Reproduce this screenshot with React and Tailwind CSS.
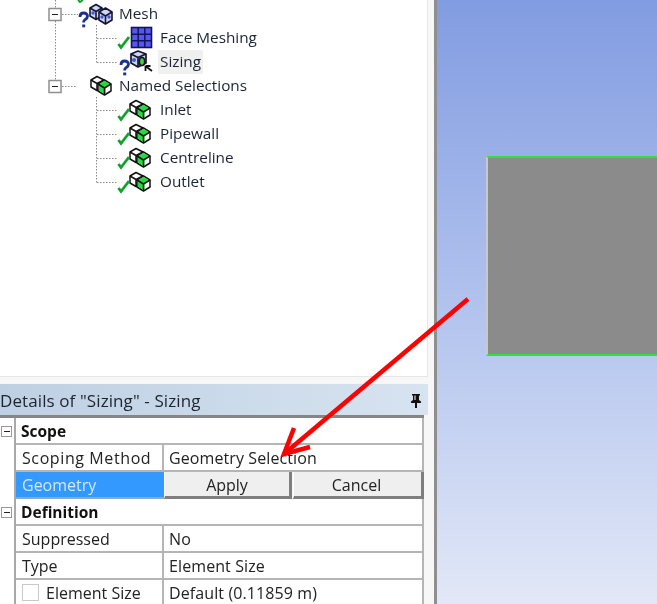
const font = { fontFamily: '"Open Sans", "Noto Sans", sans-serif' };

const Check = () => (
  <path d="M1.500 18l2.500 3.500L12 11" fill="none" stroke="#12a32a" strokeWidth="2.800" />
);

const Question = ({ x = 0 }) => (
  <g transform={`translate(${x} 0)`}>
    <path
      d="M1 15c0-2.800 1.800-4 3.800-4s3.700 1.300 3.700 3.200-1.200 2.600-2.500 3.500c-1 .7-1.400 1.500-1.400 2.800"
      fill="none"
      stroke="#1a3290"
      strokeWidth="2.800"
    />
    <rect x="3.200" y="22.500" width="3" height="2.800" fill="#1a3290" />
  </g>
);

const GreenCubes = () => (
  <g stroke="#111" strokeWidth="1.500" strokeLinejoin="round">
    <path d="M13 6l6-3.500L26 6v7l-7 3.500-6-3.500z" fill="#fff" />
    <path d="M13 6l6 3.500L26 6M19 9.500v7" fill="none" />
    <path d="M20 10l6.500-4L33 10v7l-6.500 4L20 17z" fill="#fff" />
    <path d="M21 10l5.500-3.300L32 10l-4.500 2.500v7l-1 .5-5.500-3.500z" fill="#22dd3a" stroke="none" />
    <path d="M20 10l6.500 4v7M26.500 14L33 10" fill="none" />
  </g>
);

const BlueCubes = () => (
  <g stroke="#14142e" strokeWidth="1.600" strokeLinejoin="round">
    <path d="M12 6l6-3.500L24 6v8l-6 3.500L12 14z" fill="#cdd5f8" />
    <path d="M12 6l6 3.500L24 6M18 9.500v8" fill="none" />
    <path d="M21 10l6.500-4L34 10v8l-6.500 4L21 18z" fill="#cdd5f8" />
    <path d="M21 10l6.500 4L34 10M27.500 14v8" fill="none" />
    <circle cx="15" cy="11" r="1.700" fill="#3f58dc" stroke="none" />
    <circle cx="24" cy="15" r="1.700" fill="#3f58dc" stroke="none" />
    <circle cx="31" cy="15" r="1.700" fill="#3f58dc" stroke="none" />
  </g>
);

const MeshGrid = () => (
  <g>
    <rect x="14.500" y="1.500" width="20" height="20" fill="#5656f2" stroke="#14145c" strokeWidth="1.600" />
    <path d="M21.200 2v19M27.800 2v19M15 8.200h19M15 14.800h19" stroke="#14145c" strokeWidth="1.500" />
  </g>
);

const SizingIcon = () => (
  <g>
    <g stroke="#14142e" strokeWidth="1.700" strokeLinejoin="round">
      <path d="M14 4l7-3 8 3v9l-8 4-7-4z" fill="#cdd5f8" />
      <path d="M14 4l7 3.500L29 4M21 7.500V17" fill="none" />
      <ellipse cx="25" cy="11.500" rx="2.700" ry="4" fill="#45d43a" />
      <circle cx="17" cy="10" r="2" fill="#3f58dc" stroke="none" />
    </g>
    <path d="M29 16.500l6 4.500M28.500 16v5M28.500 16h5" stroke="#111" strokeWidth="1.800" fill="none" />
  </g>
);

const icons = {
  mesh: (
    <>
      <BlueCubes />
      <Question x={1} />
    </>
  ),
  face: (
    <>
      <MeshGrid />
      <Check />
    </>
  ),
  sizing: (
    <>
      <SizingIcon />
      <Question x={3} />
    </>
  ),
  named: <GreenCubes />,
  child: (
    <>
      <GreenCubes />
      <Check />
    </>
  ),
};

const treeRows = [
  { label: "Mesh", icon: "mesh", top: true },
  { label: "Face Meshing", icon: "face" },
  { label: "Sizing", icon: "sizing", selected: true },
  { label: "Named Selections", icon: "named", top: true },
  { label: "Inlet", icon: "child" },
  { label: "Pipewall", icon: "child" },
  { label: "Centreline", icon: "child" },
  { label: "Outlet", icon: "child" },
];

const TreeLines = () => (
  <svg className="absolute left-0 top-0" width="130" height="200" fill="none">
    <g stroke="#8a8a8a" strokeWidth="1" strokeDasharray="1.500 1.500">
      <path d="M55.500 0v8M55.500 21v59" />
      <path d="M62 14.500h16M62 86.500h14" />
      <path d="M96.500 25v38M96.500 97v86" />
      <path d="M97 38.500h21M97 62.500h21M97 110.500h21M97 134.500h21M97 158.500h21M97 182.500h21" />
    </g>
    <g fill="#fff" stroke="#8f8f8f" strokeWidth="1.500">
      <rect x="49" y="8.500" width="12" height="12" />
      <rect x="49" y="80.500" width="12" height="12" />
    </g>
    <path d="M52 14.500h6M52 86.500h6" stroke="#222" strokeWidth="1.200" />
    <path d="M78 0l2 2 3-2" stroke="#12a32a" strokeWidth="2" />
  </svg>
);

const TreeRow = ({ label, icon, top, selected }) => (
  <div className={`h-6 flex items-center ${top ? "pl-[78px]" : "pl-[117px]"}`}>
    <svg width="36" height="24" viewBox="0 0 36 24" className="shrink-0 overflow-visible">
      {icons[icon]}
    </svg>
    <span
      className={`h-6 flex items-center pb-[2px] text-[15.3px] text-[#1b2433] ${top ? "ml-[5px]" : "ml-[5px] px-[2px]"} ${
        selected ? "bg-[#f0f0f0]" : ""
      }`}
    >
      {label}
    </span>
  </div>
);

const Minus = () => (
  <span className="w-[11px] h-[11px] border border-[#999] bg-white flex items-center justify-center">
    <span className="w-[6px] h-px bg-[#222]" />
  </span>
);

const GroupRow = ({ label }) => (
  <div className="h-[27px] flex">
    <div className="w-4 shrink-0 flex items-center pl-[1px] border-r-2 border-[#a9a9a9] bg-white">
      <Minus />
    </div>
    <div className="flex-1 pl-[5px] pt-[2px] flex items-center font-bold text-[15.500px] text-[#111] border-b-2 border-r-2 border-[#b5b5b5] bg-white">
      {label}
    </div>
  </div>
);

const PropRow = ({ label, value, children, labelClass = "" }) => (
  <div className="h-[27px] flex">
    <div className="w-4 shrink-0 border-r-2 border-[#a9a9a9] bg-white" />
    <div className={`w-[148px] shrink-0 pl-[6px] flex items-center text-[16px] text-[#222] border-b-2 border-r-2 border-[#b5b5b5] bg-white ${labelClass}`}>
      {children || label}
    </div>
    <div className="flex-1 pl-[5px] flex items-center text-[16px] tracking-[0.1px] text-[#222] border-b-2 border-r-2 border-[#b5b5b5] bg-white">
      {value}
    </div>
  </div>
);

const PushButton = ({ label, className }) => (
  <button
    className={`h-full pt-[2px] flex items-center justify-center bg-[#efefef] text-[16px] text-[#222] border-r-[3px] border-b-[3px] border-[#7f7f7f] border-l border-l-white ${className}`}
  >
    {label}
  </button>
);

const PinIcon = () => (
  <svg width="12" height="15" viewBox="0 0 12 15">
    <path d="M2 1h8v1.500H9V7l2 1.500V10H1V8.500L3 7V2.500H2z" fill="#111" />
    <path d="M5 10h2v5H5z" fill="#111" />
    <path d="M4.500 2.500h1V7h-1z" fill="#fff" />
  </svg>
);

// red callout over the table and the viewport
const Arrow = () => (
  <svg className="absolute left-0 top-0 pointer-events-none" width="657" height="604" fill="none">
    <path d="M468 299L284 454" stroke="#fe0000" strokeWidth="4.500" />
    <path d="M294 428L284 454L310 447" stroke="#fe0000" strokeWidth="4.500" />
  </svg>
);

export default function App() {
  return (
    <div style={font} className="relative w-[657px] h-[604px] flex overflow-hidden bg-white blur-[0.35px]">
      <div className="w-[437px] shrink-0 flex flex-col bg-[#f7f7f7] border-r-[3px] border-[#8f8f8f]">
        <div className="relative h-[377px] shrink-0 w-[428px] pt-[2px] bg-white border-r border-b border-[#e6e6e6]">
          <TreeLines />
          <div className="relative">
            {treeRows.map((row) => (
              <TreeRow key={row.label} {...row} />
            ))}
          </div>
        </div>
        <div className="h-[7px] shrink-0" />
        <div className="w-[428px] h-[31px] shrink-0 flex items-center justify-between pt-[2px] pr-[6px] bg-gradient-to-r from-[#bed0e3] to-[#d7e3f0] text-[17px] tracking-[0.1px] text-[#1d2430]">
          <span>Details of "Sizing" - Sizing</span>
          <PinIcon />
        </div>
        <div className="w-[424px] h-[3px] shrink-0 bg-[#858585]" />
        <div className="w-[424px] flex flex-col">
          <GroupRow label="Scope" />
          <PropRow label="Scoping Method" value="Geometry Selection" labelClass="tracking-[0.6px]" />
          <div className="h-[27px] flex">
            <div className="w-4 shrink-0 border-r-2 border-[#a9a9a9] bg-white" />
            <div className="w-[148px] shrink-0 pl-[6px] flex items-center text-[16px] text-[#d5e6ff] bg-[#3399ff] border-b-2 border-[#8fa8c4]">
              Geometry
            </div>
            <PushButton label="Apply" className="w-[128px] mr-px" />
            <PushButton label="Cancel" className="w-[131px] pr-[2px]" />
          </div>
          <GroupRow label="Definition" />
          <PropRow label="Suppressed" value="No" />
          <PropRow label="Type" value="Element Size" />
          <PropRow value="Default (0.11859 m)" label="Element Size">
            <span className="w-[17px] h-[17px] border border-[#c8c8c8] bg-white mr-[7px]" />
            Element Size
          </PropRow>
        </div>
      </div>
      <div className="flex-1 pt-[156px] pl-[49px] bg-gradient-to-b from-[#829ce1] to-[#e2e8f7]">
        <div className="h-[200px] bg-[#8b8b8b] border-y-2 border-[#2fe03f] border-l-2 border-l-[#c9c9c9]" />
      </div>
      <Arrow />
    </div>
  );
}
